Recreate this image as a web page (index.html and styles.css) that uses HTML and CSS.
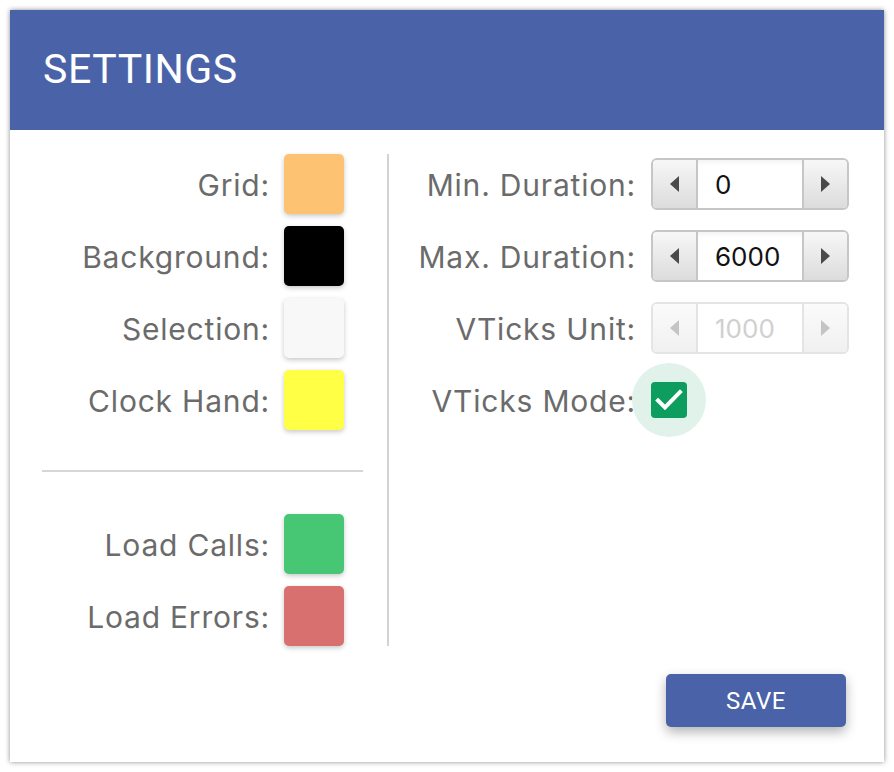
FILE: index.html
```html
<!DOCTYPE html>
<html>
<head>
<meta charset="utf-8">
<link rel="stylesheet" href="styles.css">
</head>
<body>
<div class="dialog">
  <div class="header"><h1 class="title">SETTINGS</h1></div>
  <div class="content">
    <div class="col-left">
      <div class="row"><span class="label">Grid:</span><span class="swatch sw-grid"></span></div>
      <div class="row"><span class="label">Background:</span><span class="swatch sw-bg"></span></div>
      <div class="row"><span class="label">Selection:</span><span class="swatch sw-sel"></span></div>
      <div class="row"><span class="label">Clock Hand:</span><span class="swatch sw-clock"></span></div>
      <div class="hr"></div>
      <div class="row"><span class="label">Load Calls:</span><span class="swatch sw-calls"></span></div>
      <div class="row"><span class="label">Load Errors:</span><span class="swatch sw-errors"></span></div>
    </div>
    <div class="vdiv"></div>
    <div class="col-right">
      <div class="row"><span class="label">Min. Duration:</span>
        <div class="control">
          <div class="spinner">
            <span class="sbtn"><span class="tri-l"></span></span>
            <span class="sval">0</span>
            <span class="sbtn"><span class="tri-r"></span></span>
          </div>
        </div>
      </div>
      <div class="row"><span class="label">Max. Duration:</span>
        <div class="control">
          <div class="spinner">
            <span class="sbtn"><span class="tri-l"></span></span>
            <span class="sval">6000</span>
            <span class="sbtn"><span class="tri-r"></span></span>
          </div>
        </div>
      </div>
      <div class="row"><span class="label">VTicks Unit:</span>
        <div class="control">
          <div class="spinner disabled">
            <span class="sbtn"><span class="tri-l"></span></span>
            <span class="sval">1000</span>
            <span class="sbtn"><span class="tri-r"></span></span>
          </div>
        </div>
      </div>
      <div class="row"><span class="label">VTicks Mode:</span>
        <div class="control">
          <span class="check-wrap">
            <span class="halo"></span>
            <span class="check">
              <svg width="36" height="36" viewBox="0 0 36 36"><path d="M7 18.5 L14 25.5 L29 10" fill="none" stroke="#fff" stroke-width="4" stroke-linecap="square"/></svg>
            </span>
          </span>
        </div>
      </div>
    </div>
  </div>
  <div class="footer"><button class="save">SAVE</button></div>
</div>
</body>
</html>
```
FILE: styles.css
```css
html, body {
  margin: 0;
  padding: 0;
  background: #fff;
}
body {
  padding: 10px;
  font-family: Inter, "Noto Sans", sans-serif;
}
.dialog {
  width: 874px;
  height: 752px;
  background: #fff;
  box-shadow: 0 0 5px rgba(0,0,0,0.45);
  display: flex;
  flex-direction: column;
}
.header {
  height: 120px;
  background: #4a63a8;
  display: flex;
  align-items: center;
  padding-left: 33px;
  flex: none;
}
.title {
  margin: 0;
  color: #fff;
  font-family: Roboto, sans-serif;
  font-weight: 400;
  font-size: 41px;
  letter-spacing: 0.6px;
  padding-bottom: 2px;
}
.content {
  display: flex;
  padding: 24px 35px 0 32px;
}
.col-left {
  width: 321px;
  display: flex;
  flex-direction: column;
  gap: 12px;
}
.col-left .row {
  padding-right: 19px;
}
.row {
  height: 60px;
  display: flex;
  align-items: center;
  justify-content: flex-end;
  gap: 14px;
}
.label {
  font-size: 30px;
  color: #6b6b6b;
  letter-spacing: 0.8px;
  padding-top: 2px;
}
.swatch {
  width: 60px;
  height: 60px;
  border-radius: 5px;
  box-shadow: 0 2px 5px rgba(0,0,0,0.22);
  flex: none;
}
.sw-grid { background: #fec372; }
.sw-bg { background: #000; }
.sw-sel { background: #f8f8f8; }
.sw-clock { background: #ffff45; }
.sw-calls { background: #47c774; }
.sw-errors { background: #d87070; }
.hr {
  height: 2px;
  background: #d6d6d6;
  margin: 28px 0 30px;
}
.vdiv {
  width: 2px;
  background: #d2d2d2;
  margin: 0 0 0 24px;
  height: 492px;
}
.col-right {
  flex: 1;
  display: flex;
  flex-direction: column;
  gap: 12px;
}
.col-right .row { gap: 15px; }
.control {
  width: 198px;
  display: flex;
  align-items: center;
}
.spinner {
  width: 198px;
  height: 52px;
  box-sizing: border-box;
  border: 2px solid #c6c6c6;
  border-radius: 6px;
  display: flex;
  overflow: hidden;
  background: #fff;
}
.sbtn {
  width: 43px;
  flex: none;
  background: linear-gradient(#f7f7f7, #dcdcdc);
  display: flex;
  align-items: center;
  justify-content: center;
}
.sbtn:first-child { border-right: 2px solid #c6c6c6; }
.sbtn:last-child { border-left: 2px solid #c6c6c6; }
.sval {
  flex: 1;
  display: flex;
  align-items: center;
  padding-left: 17px;
  font-size: 26px;
  color: #111;
  background: linear-gradient(#f4f4f4, #fff 6px);
}
.tri-l, .tri-r {
  width: 0;
  height: 0;
  border-top: 8px solid transparent;
  border-bottom: 8px solid transparent;
}
.tri-l { border-right: 9px solid #4a4a4a; }
.tri-r { border-left: 9px solid #4a4a4a; }
.disabled { border-color: #e4e4e4; }
.disabled .sbtn { background: linear-gradient(#fbfbfb, #f0f0f0); }
.disabled .sbtn:first-child { border-right-color: #e4e4e4; }
.disabled .sbtn:last-child { border-left-color: #e4e4e4; }
.disabled .sval { color: #d0d0d0; background: #fff; }
.disabled .tri-l { border-right-color: #c4c4c4; }
.disabled .tri-r { border-left-color: #c4c4c4; }
.check-wrap {
  position: relative;
  width: 36px;
  height: 36px;
}
.halo {
  position: absolute;
  left: -19px;
  top: -19px;
  width: 74px;
  height: 74px;
  border-radius: 50%;
  background: #e0f2ea;
}
.check {
  position: absolute;
  left: 0;
  top: 0;
  width: 36px;
  height: 36px;
  border-radius: 4px;
  background: #0c9d5f;
}
.check svg { display: block; }
.footer {
  display: flex;
  justify-content: flex-end;
  padding: 28px 38px 0 0;
}
.save {
  width: 180px;
  height: 53px;
  border: none;
  border-radius: 5px;
  background: #4a63a8;
  color: #fff;
  font-family: Roboto, sans-serif;
  font-size: 24px;
  letter-spacing: 0.5px;
  box-shadow: 0 5px 12px rgba(0,0,0,0.3);
  cursor: pointer;
}
```
